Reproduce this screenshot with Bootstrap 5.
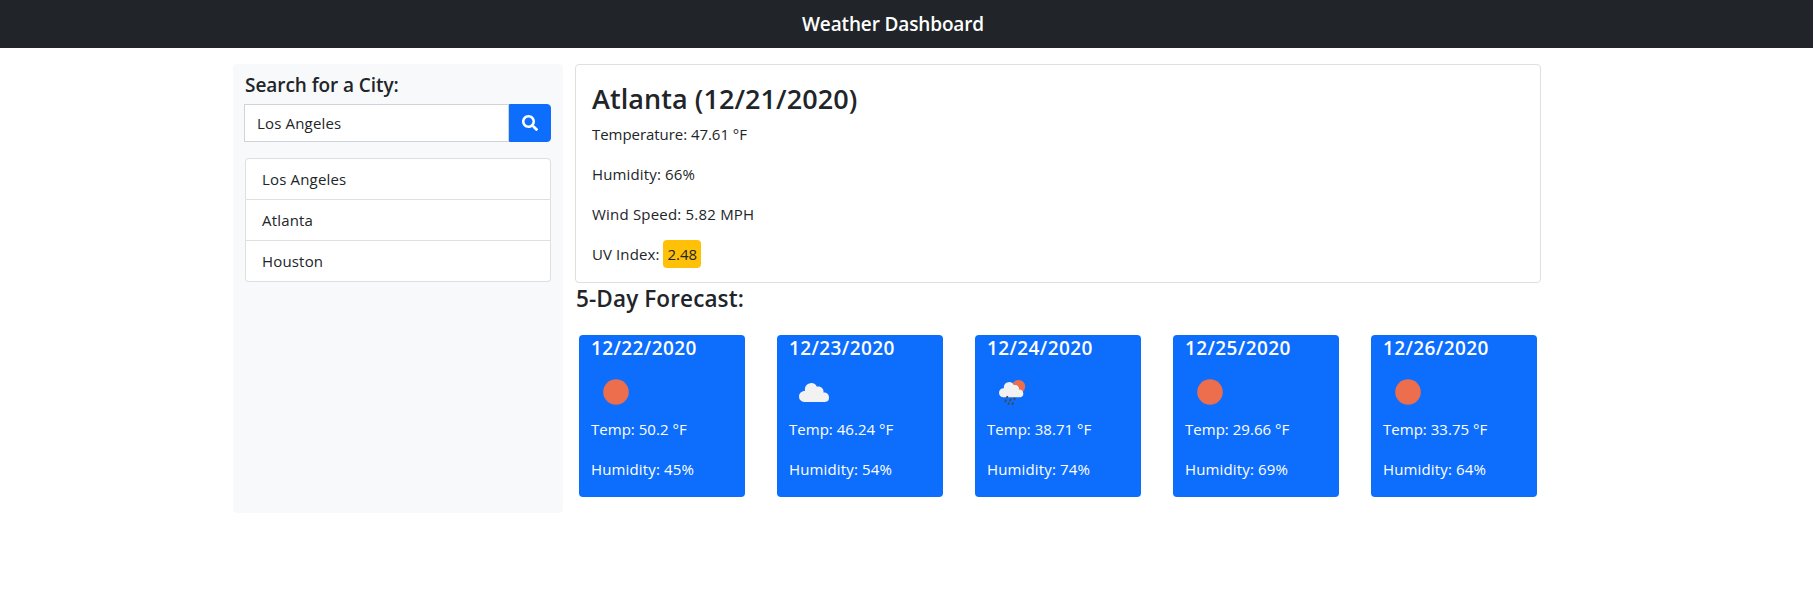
<!DOCTYPE html>
<html lang="en">
<head>
<meta charset="utf-8">
<meta name="viewport" content="width=device-width, initial-scale=1">
<title>Weather Dashboard</title>
<link href="https://cdn.jsdelivr.net/npm/bootstrap@5.3.0/dist/css/bootstrap.min.css" rel="stylesheet">
<style>
  body { font-family: "Open Sans", "Noto Sans", sans-serif; font-size: 15px; line-height: 24px; padding-right: 27px; overflow: hidden; }
  .topbar { height: 48px; margin-right: -27px; padding-right: 27px; }
  .brand, .side-title, .city-title, .forecast-title, .day-title { font-weight: 600; }
  .brand { font-size: 19px; line-height: 24px; letter-spacing: -.14px; }
  .page { width: 1320px; }
  .sidebar { width: 330px; height: 449px; border-radius: 4px; padding: 9px 12px 0; }
  .side-title { font-size: 19px; line-height: 24px; letter-spacing: -.06px; margin-bottom: 7px; }
  .search .form-control { height: 38px; font-size: 15px; line-height: 24px; letter-spacing: .17px; margin-left: -1px; border-color: #ced4da; border-radius: 0; }
  .search .btn { width: 42px; border-radius: 0 4px 4px 0; margin-left: 0 !important; }
  .search .btn svg { display: block; margin: -1px auto 0; }
  .cities { --bs-list-group-border-radius: 4px; --bs-list-group-border-color: #dfdfdf; letter-spacing: .17px; }
  .current { height: 219px; --bs-card-border-radius: 4px; --bs-card-border-color: #dfdfdf; }
  .current .card-body { padding-top: 17px; }
  .city-title { font-size: 27px; line-height: 33px; margin-bottom: 7px; letter-spacing: .07px; }
  .temp { letter-spacing: -.05px; }
  .humid { letter-spacing: .14px; }
  .wind { letter-spacing: .2px; }
  .uv-label { letter-spacing: .1px; }
  .uv { border-radius: 4px; padding: 4px; letter-spacing: 0; }
  .forecast-title { font-size: 22.5px; line-height: 28px; padding: 2px 0 0 1px; margin-bottom: 6px; letter-spacing: .12px; }
  .forecast { margin: 0 -12px; }
  .day { height: 162px; border-radius: 4px; padding: 0 12px; margin: 16px; }
  .day-title { font-size: 19px; line-height: 24px; padding-top: 1px; margin-bottom: 7px; letter-spacing: .4px; }
  .day svg { display: block; }
  .day .temp { letter-spacing: .03px; }
</style>
</head>
<body>
<svg width="0" height="0" class="position-absolute" aria-hidden="true">
  <symbol id="clear" viewBox="0 0 50 50"><circle cx="25" cy="25" r="12.8" fill="#ec6e4c"/></symbol>
  <symbol id="cloudy" viewBox="0 0 50 50"><path fill="#f2f2f2" d="M15.200 35a5.300 5.300 0 0 1-5.200-5.500c0-3.300 2.600-5.700 5.900-5.600v-1.900a6.300 6.300 0 0 1 12-2.200c3.500-1 7.100 1.700 6.600 5.800 3.100-.2 5.500 1.800 5.500 4.900A4.300 4.300 0 0 1 36 35z"/></symbol>
  <symbol id="rainy" viewBox="0 0 50 50">
    <circle cx="31.600" cy="19.500" r="6.600" fill="#ec6e4c"/>
    <path fill="#f2f2f2" d="M16.300 30.300a4.300 4.300 0 0 1-4.300-4.500c0-2.700 2.100-4.600 4.900-4.500v-1.500a5.200 5.200 0 0 1 9.900-1.700c2.900-.8 5.600 1.500 5.200 4.500 2.500-.2 4.300 1.500 4.300 4a3.600 3.600 0 0 1-3.500 3.700z"/>
    <path stroke="#48484a" stroke-width="1.700" d="M20.500 29l-.7 2M24 31.900l-1.300 2.300M27.800 30.800l-.6 2.200M19.200 32.700l-1.300 2.500M22.200 35.500l-1.100 2.100M26.300 35.500l-1.200 2.300"/>
  </symbol>
</svg>

<nav class="topbar bg-dark d-flex align-items-center justify-content-center">
  <h1 class="brand text-white mb-0">Weather Dashboard</h1>
</nav>
<div class="page mx-auto mt-3 d-flex">
  <aside class="sidebar bg-light">
    <h2 class="side-title">Search for a City:</h2>
    <div class="input-group search mb-3">
      <input class="form-control" value="Los Angeles" aria-label="City">
      <button class="btn btn-primary p-0" aria-label="Search">
        <svg width="16" height="16" viewBox="0 0 512 512" fill="#fff"><path d="M505 442.700 405.300 343c-4.500-4.500-10.600-7-17-7H372c27.600-35.300 44-79.700 44-128C416 93.100 322.900 0 208 0S0 93.100 0 208s93.100 208 208 208c48.300 0 92.700-16.400 128-44v16.300c0 6.400 2.500 12.500 7 17l99.700 99.700c9.400 9.400 24.600 9.400 33.900 0l28.300-28.300c9.400-9.400 9.400-24.600.1-34zM208 336c-70.700 0-128-57.200-128-128 0-70.700 57.200-128 128-128 70.700 0 128 57.200 128 128 0 70.700-57.200 128-128 128z"/></svg>
      </button>
    </div>
    <ul class="list-group cities">
      <li class="list-group-item">Los Angeles</li>
      <li class="list-group-item">Atlanta</li>
      <li class="list-group-item">Houston</li>
    </ul>
  </aside>
  <main class="flex-fill px-2 ms-1 me-1">
    <section class="card current">
      <div class="card-body">
        <h2 class="city-title">Atlanta (12/21/2020)</h2>
        <p class="temp">Temperature: 47.61 °F</p>
        <p class="humid">Humidity: 66%</p>
        <p class="wind">Wind Speed: 5.82 MPH</p>
        <p class="uv-label mb-0">UV Index: <span class="uv bg-warning">2.48</span></p>
      </div>
    </section>
    <h3 class="forecast-title">5-Day Forecast:</h3>
    <div class="forecast row row-cols-5 g-0">
      <div class="col"><div class="day bg-primary text-white">
        <h4 class="day-title">12/22/2020</h4>
        <svg width="50" height="50"><use href="#clear"/></svg>
        <p class="temp">Temp: 50.2 °F</p>
        <p class="humid">Humidity: 45%</p>
      </div></div>
      <div class="col"><div class="day bg-primary text-white">
        <h4 class="day-title">12/23/2020</h4>
        <svg width="50" height="50"><use href="#cloudy"/></svg>
        <p class="temp">Temp: 46.24 °F</p>
        <p class="humid">Humidity: 54%</p>
      </div></div>
      <div class="col"><div class="day bg-primary text-white">
        <h4 class="day-title">12/24/2020</h4>
        <svg width="50" height="50"><use href="#rainy"/></svg>
        <p class="temp">Temp: 38.71 °F</p>
        <p class="humid">Humidity: 74%</p>
      </div></div>
      <div class="col"><div class="day bg-primary text-white">
        <h4 class="day-title">12/25/2020</h4>
        <svg width="50" height="50"><use href="#clear"/></svg>
        <p class="temp">Temp: 29.66 °F</p>
        <p class="humid">Humidity: 69%</p>
      </div></div>
      <div class="col"><div class="day bg-primary text-white">
        <h4 class="day-title">12/26/2020</h4>
        <svg width="50" height="50"><use href="#clear"/></svg>
        <p class="temp">Temp: 33.75 °F</p>
        <p class="humid">Humidity: 64%</p>
      </div></div>
    </div>
  </main>
</div>
</body>
</html>
